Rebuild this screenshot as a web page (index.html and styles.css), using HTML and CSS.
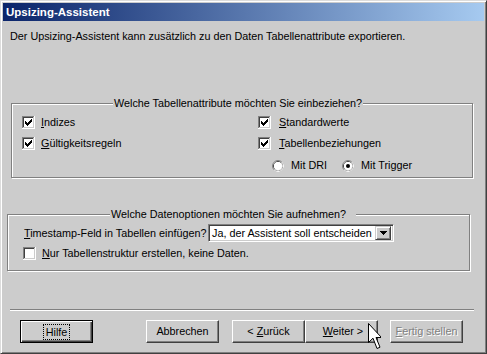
FILE: index.html
```html
<!DOCTYPE html>
<html lang="de">
<head>
    <meta charset="UTF-8">
    <title>Upsizing-Assistent</title>
    <link rel="stylesheet" href="styles.css">
</head>
<body>
    <svg class="defs" width="0" height="0">
        <symbol id="cb" viewBox="0 0 13 13">
            <rect width="13" height="13" fill="#fff"/>
            <rect width="12" height="1" fill="#808080"/>
            <rect width="1" height="12" fill="#808080"/>
            <rect x="1" y="1" width="10" height="1" fill="#404040"/>
            <rect x="1" y="1" width="1" height="10" fill="#404040"/>
            <rect x="1" y="11" width="11" height="1" fill="#cccccc"/>
            <rect x="11" y="1" width="1" height="11" fill="#cccccc"/>
        </symbol>
        <symbol id="tick" viewBox="0 0 13 13">
            <path d="M9 3h1v1h-1zM8 4h2v1h-2zM3 5h1v1h-1zM7 5h3v1h-3zM3 6h2v1h-2zM6 6h3v1h-3zM3 7h5v1h-5zM4 8h3v1h-3zM5 9h1v1h-1z" fill="#000"/>
        </symbol>
        <symbol id="radio" viewBox="0 0 12 12">
            <circle cx="6" cy="6" r="5.5" fill="#fff" stroke="#808080"/>
            <path d="M9.89 2.11A5.5 5.5 0 0 1 2.11 9.89" fill="none" stroke="#fff"/>
            <circle cx="6" cy="6" r="4.5" fill="none" stroke="#404040"/>
            <path d="M9.18 2.82A4.5 4.5 0 0 1 2.82 9.18" fill="none" stroke="#cccccc"/>
            <circle cx="6" cy="6" r="4" fill="#fff"/>
        </symbol>
    </svg>

    <div class="window">
        <div class="titlebar">Upsizing-Assistent</div>
        <div class="content">
            <p class="intro">Der Upsizing-Assistent kann zusätzlich zu den Daten Tabellenattribute exportieren.</p>

            <fieldset class="group group-attrs">
                <legend>Welche Tabellenattribute möchten Sie einbeziehen?</legend>
                <div class="attr-grid">
                    <label class="check">
                        <svg class="box" width="13" height="13"><use href="#cb"/><use href="#tick"/></svg>
                        <span><u>I</u>ndizes</span>
                    </label>
                    <label class="check">
                        <svg class="box" width="13" height="13"><use href="#cb"/><use href="#tick"/></svg>
                        <span><u>S</u>tandardwerte</span>
                    </label>
                    <label class="check">
                        <svg class="box" width="13" height="13"><use href="#cb"/><use href="#tick"/></svg>
                        <span><u>G</u>ültigkeitsregeln</span>
                    </label>
                    <label class="check">
                        <svg class="box" width="13" height="13"><use href="#cb"/><use href="#tick"/></svg>
                        <span><u>T</u>abellenbeziehungen</span>
                    </label>
                </div>
                <div class="radios">
                    <label class="radio">
                        <svg width="12" height="12"><use href="#radio"/></svg>
                        <span>Mit DRI</span>
                    </label>
                    <label class="radio">
                        <svg width="12" height="12"><use href="#radio"/><circle cx="6" cy="6" r="2" fill="#000"/></svg>
                        <span>Mit Trigger</span>
                    </label>
                </div>
            </fieldset>

            <fieldset class="group group-data">
                <legend>Welche Datenoptionen möchten Sie aufnehmen?</legend>
                <div class="field-row">
                    <span class="field-label"><u>T</u>imestamp-Feld in Tabellen einfügen?</span>
                    <div class="select">
                        <span class="select-value">Ja, der Assistent soll entscheiden</span>
                        <span class="select-btn">
                            <svg width="7" height="4" viewBox="0 0 7 4"><path d="M0 0h7v1h-7zM1 1h5v1h-5zM2 2h3v1h-3zM3 3h1v1h-1z" fill="#000"/></svg>
                        </span>
                    </div>
                </div>
                <label class="check">
                    <svg class="box" width="13" height="13"><use href="#cb"/></svg>
                    <span><u>N</u>ur Tabellenstruktur erstellen, keine Daten.</span>
                </label>
            </fieldset>

            <div class="separator"></div>

            <div class="buttons">
                <button class="btn btn-default"><span class="focus">Hilfe</span></button>
                <button class="btn btn-cancel">Abbrechen</button>
                <button class="btn btn-back">&lt; <u>Z</u>urück</button>
                <button class="btn">&nbsp;<u>W</u>eiter &gt;</button>
                <button class="btn btn-finish" disabled><u>F</u>ertig stellen</button>
            </div>
        </div>

        <svg class="cursor" width="13" height="28" viewBox="0 0 13 28">
            <path d="M0.5 0.5V19.5L5 15.2L9 25.5L12 24.2L8 14.5H13.5Z" fill="#fff" stroke="#000" stroke-linejoin="miter"/>
        </svg>
    </div>
</body>
</html>
```

FILE: styles.css
```css
* {
    box-sizing: border-box;
}
body {
    margin: 0;
    font-family: 'Liberation Sans', Arial, sans-serif;
    font-size: 10.8px;
    line-height: 13px;
    color: #000;
    background: #cccccc;
}
.defs {
    position: absolute;
}
.window {
    position: relative;
    width: 487px;
    height: 354px;
    padding: 2px;
    background: #cccccc;
    border: 1px solid;
    border-color: #dcdcdc #404040 #404040 #dcdcdc;
    box-shadow: inset 1px 1px 0 #fff, inset -1px -1px 0 #808080;
}
.titlebar {
    height: 18px;
    padding: 3px 0 0 3px;
    color: #fff;
    font-weight: bold;
    font-size: 11.5px;
    background: linear-gradient(to right, #0a246a, #a6caf0);
}
.content {
    padding-top: 9px;
}
.intro {
    margin: 0 0 0 7px;
}

/* group boxes */
.group {
    margin: 0;
    padding: 0;
    min-inline-size: 0;
    border: 1px solid #808080;
    box-shadow: inset 1px 1px 0 #fff, 1px 1px 0 #fff;
}
.group legend {
    padding: 0 1px;
    background: #cccccc;
}
.group-attrs {
    margin: 54px 11px 0 8px;
    padding: 6px 0 5px 10px;
}
.group-attrs legend {
    margin-left: 91px;
}
.group-data {
    margin: 30px 14px 0 4px;
    padding: 3px 0 10px 15px;
}
.group-data legend {
    margin-left: 87px;
    padding-right: 10px;
}
.attr-grid {
    display: grid;
    grid-template-columns: 236px auto;
    row-gap: 8px;
}
.check {
    display: flex;
    align-items: center;
    gap: 6px;
    white-space: nowrap;
}
.check .box {
    flex: none;
}
.group-attrs .check:nth-child(even) span {
    margin-left: 2px;
}
.radios {
    display: flex;
    margin: 9px 0 0 250px;
    gap: 15px;
}
.radio {
    display: flex;
    align-items: center;
    gap: 7px;
}
.field-row {
    display: flex;
    align-items: center;
    margin-left: 1px;
    margin-bottom: 5px;
    white-space: nowrap;
}
.field-label {
    width: 184px;
}
.select {
    display: flex;
    align-items: center;
    width: 186px;
    height: 18px;
    padding: 2px 2px 2px 1px;
    background: #fff;
    border: 1px solid;
    border-color: #808080 #fff #fff #808080;
    box-shadow: inset 1px 1px 0 #404040, inset -1px -1px 0 #cccccc;
}
.select-value {
    flex: 1;
    padding-left: 2px;
    overflow: hidden;
}
.select-btn {
    flex: none;
    display: flex;
    align-items: center;
    justify-content: center;
    width: 16px;
    height: 14px;
    background: #cccccc;
    border: 1px solid;
    border-color: #cccccc #404040 #404040 #cccccc;
    box-shadow: inset 1px 1px 0 #fff, inset -1px -1px 0 #808080;
}

/* bottom buttons */
.separator {
    height: 2px;
    margin: 38px 10px 0 7px;
    border-top: 1px solid #808080;
    border-bottom: 1px solid #fff;
}
.buttons {
    display: flex;
    margin: 9px 0 0 17px;
}
.btn {
    width: 73px;
    height: 23px;
    padding: 0;
    font: inherit;
    color: #000;
    background: #cccccc;
    border: 1px solid;
    border-color: #fff #404040 #404040 #fff;
    box-shadow: inset -1px -1px 0 #808080;
}
.btn-default {
    border: 1px solid #000;
    box-shadow: inset 1px 1px 0 #fff, inset -1px -1px 0 #404040, inset -2px -2px 0 #808080;
}
.btn-default .focus {
    display: inline-block;
    padding: 0 2px;
    line-height: 14px;
    outline: 1px dotted #000;
}
.btn-cancel {
    margin-left: 53px;
}
.btn-back {
    margin-left: 13px;
}
.btn-finish {
    margin-left: 12px;
    color: #808080;
    text-shadow: 1px 1px 0 #fff;
}

/* mouse pointer lying over the dialog */
.cursor {
    position: absolute;
    left: 367px;
    top: 322px;
}
```
